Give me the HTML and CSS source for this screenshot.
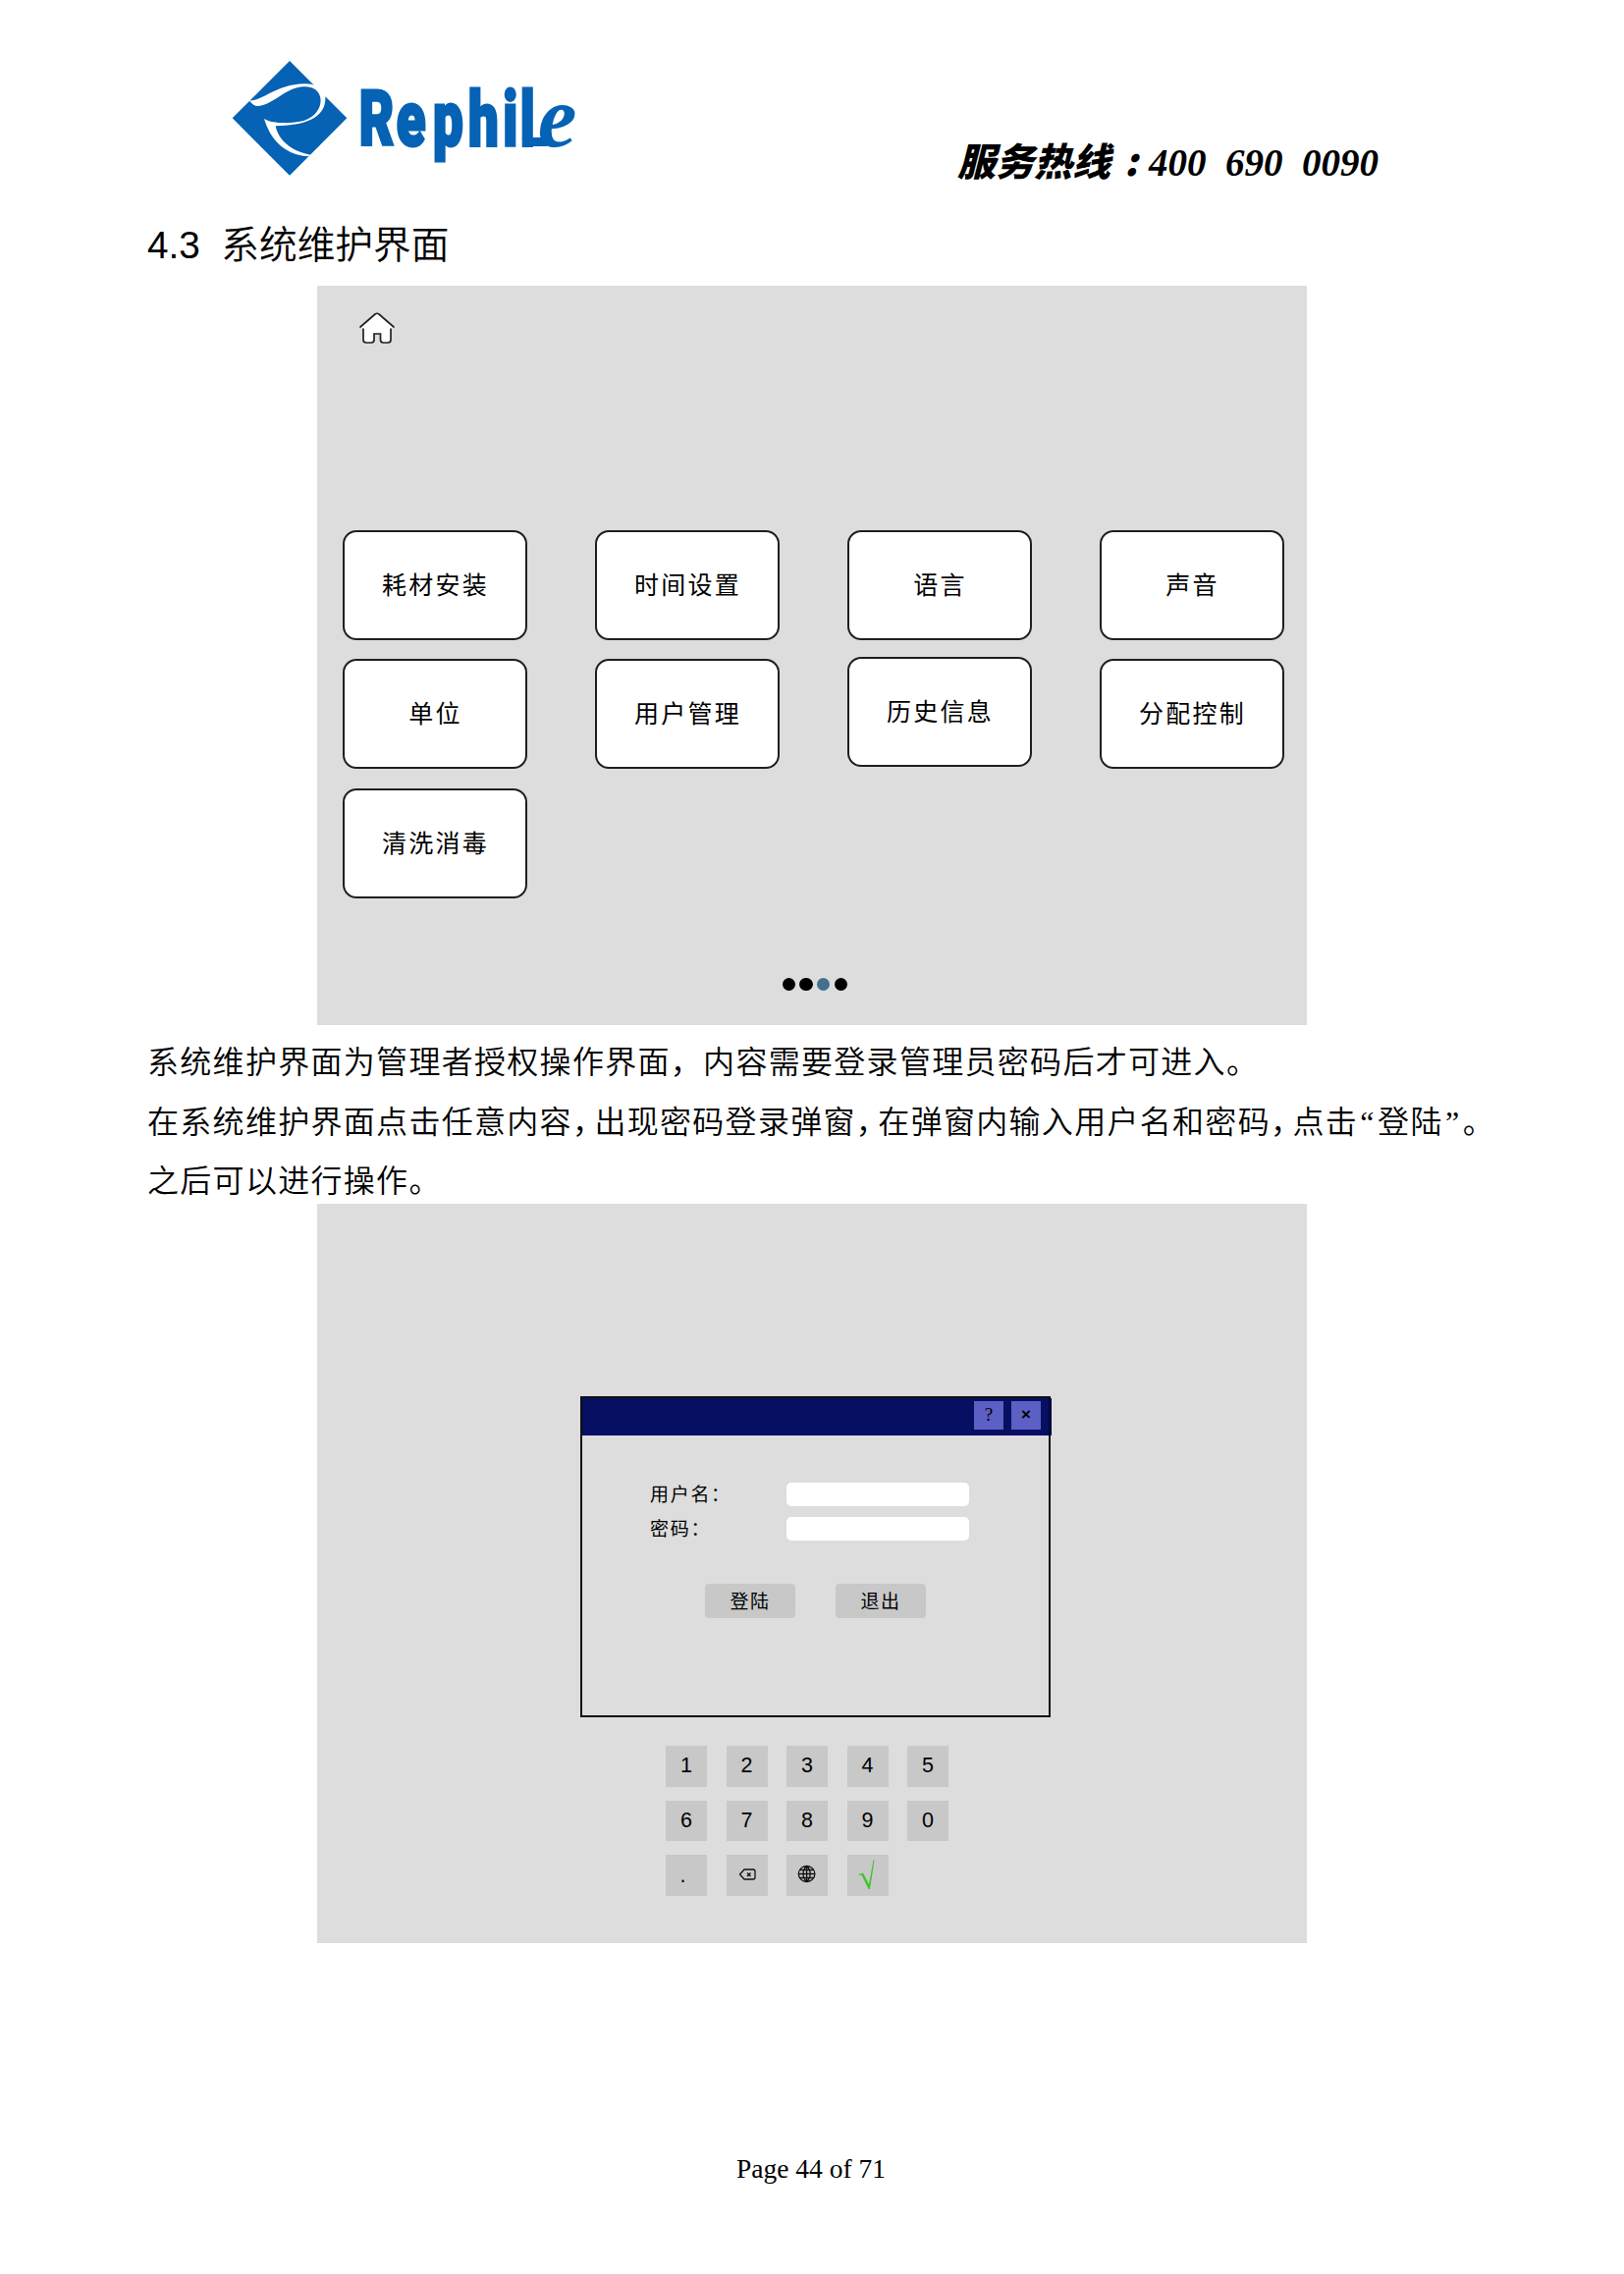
FILE: index.html
```html
<!DOCTYPE html>
<html lang="zh-CN">
<head>
<meta charset="utf-8">
<title>4.3 系统维护界面</title>
<link rel="stylesheet" href="styles.css">
</head>
<body>
<div class="page">
  <header class="header">
    <svg class="logo" viewBox="0 0 1200 420" role="img" aria-label="Rephile">
      <path class="brand" d="M225 36 400 211 225 386 50 211Z"/>
      <path class="swoosh" d="M98 158C145 160 180 108 270 106Q290 105 306 112L334 142C338 195 300 233 182 235C190 275 225 312 292 324L280 328C200 320 165 270 147 213C180 232 240 225 270 218C310 205 325 170 318 145C312 122 290 112 265 115C210 120 175 170 130 174Q115 176 104 160Z"/>
      <text class="brand wordmark" transform="scale(.7 1)" y="295" x="625 787 947 1101 1253 1328">Rephil</text>
      <path class="brand" d="M935 270H1000L1012 297H960Q935 292 935 270Z"/>
      <text class="brand wordmark-e" x="983" y="297">e</text>
    </svg>
    <div class="hotline"><span class="hotline-label">服务热线</span><span class="hotline-colon">:</span>400&nbsp; 690&nbsp; 0090</div>
  </header>

  <h1 class="title"><span class="num">4.3&nbsp; </span>系统维护界面</h1>

  <section class="panel menu">
    <svg class="home" viewBox="0 0 38 34">
      <path class="home-fill" d="M2 16 19 2 36 16 33 18V32H23V22H16V32H5V18Z"/>
      <path class="home-line" d="M2 16 17 3Q19 1.500 21 3L36 16M5 18V29Q5 32 8 32H13Q16 32 16 29V23H22.500V29Q22.500 32 25.500 32H30Q33 32 33 29V18"/>
    </svg>
    <div class="tiles">
      <div class="tile">耗材安装</div>
      <div class="tile">时间设置</div>
      <div class="tile">语言</div>
      <div class="tile">声音</div>
      <div class="tile">单位</div>
      <div class="tile">用户管理</div>
      <div class="tile raised">历史信息</div>
      <div class="tile">分配控制</div>
      <div class="tile">清洗消毒</div>
    </div>
    <div class="dots"><i></i><i></i><i class="current"></i><i></i></div>
  </section>

  <div class="copy">
    <p>系统维护界面为管理者授权操作界面，内容需要登录管理员密码后才可进入。</p>
    <p>在系统维护界面点击任意内容<span class="tight">，</span>出现密码登录弹窗<span class="tight">，</span>在弹窗内输入用户名和密码<span class="tight">，</span>点击<span class="quote">“</span>登陆<span class="quote">”</span>。</p>
    <p>之后可以进行操作。</p>
  </div>

  <section class="panel login">
    <div class="dialog">
      <div class="titlebar"><span class="win help">?</span><span class="win close">×</span></div>
      <div class="dialog-body">
        <div class="field"><label>用户名：</label><span class="input"></span></div>
        <div class="field"><label>密码：</label><span class="input"></span></div>
        <div class="actions"><span class="action">登陆</span><span class="action">退出</span></div>
      </div>
    </div>
    <div class="keys">
      <span>1</span><span>2</span><span>3</span><span>4</span><span>5</span>
      <span>6</span><span>7</span><span>8</span><span>9</span><span>0</span>
      <span class="point">.</span>
      <span><svg width="42" height="41" viewBox="0 0 42 41"><path class="ink" d="M13.500 20 18 15H27Q29 15 29 17V23Q29 25 27 25H18ZM21 18.500 24.500 22M24.500 18.500 21 22"/></svg></span>
      <span><svg width="42" height="41" viewBox="0 0 42 41"><path class="ink" d="M12.300 19.500A8.300 8 0 1 1 28.900 19.500A8.300 8 0 1 1 12.300 19.500M20.600 11.500V27.500M12.500 19.500H29M13.500 15.500H27.700M13.500 23.500H27.700M20.600 11.500C15.800 16 15.800 23 20.600 27.500C25.400 23 25.400 16 20.600 11.500"/></svg></span>
      <span><svg width="42" height="41" viewBox="0 0 42 41"><path class="tick-fill" d="M11.500 20 16 18.500 22 30 26.500 5.500H27.500L23 35H21.500L14.500 20.500 12 21Z"/></svg></span>
    </div>
  </section>

  <footer class="footer">Page 44 of 71</footer>
</div>
</body>
</html>
```
FILE: styles.css
```css
* { box-sizing: border-box; }

body {
  margin: 0;
  background: #fff;
  color: #000;
  font-family: "Noto Sans CJK SC", sans-serif;
}

.page {
  width: 1654px;
  height: 2316px;
  display: flex;
  flex-direction: column;
  overflow: hidden;
}

/* Header */
.header {
  height: 215px;
  padding: 50px 0 0 220px;
  display: flex;
  align-items: flex-start;
  flex: none;
}
.logo { width: 400px; height: 140px; flex: none; }
.brand { fill: #0562b4; }
.swoosh { fill: #fff; }
.wordmark {
  font: 900 234px Roboto, sans-serif;
  stroke: #0562b4;
  stroke-width: 9;
  stroke-linejoin: miter;
}
.wordmark-e { font: italic bold 268px "Liberation Serif", serif; }
.hotline {
  display: flex;
  align-items: baseline;
  margin: 84px 0 0 355px;
  font: italic bold 39px/56px "Liberation Serif", serif;
  white-space: pre;
}
.hotline-label {
  width: 164px;
  font-family: "Noto Sans CJK SC", sans-serif;
  font-weight: 900;
  line-height: 56px;
}
.hotline-colon {
  width: 31px;
  padding-left: 6px;
  font-family: "Noto Sans CJK SC", sans-serif;
  font-weight: 900;
}

.title {
  flex: none;
  height: 76px;
  margin: 0;
  padding: 3px 0 0 150px;
  font-size: 38.700px;
  font-weight: 350;
  line-height: 56px;
}
.num { font-family: "Liberation Sans", sans-serif; font-weight: 400; }

/* Screen panels */
.panel {
  flex: none;
  width: 1008px;
  height: 753px;
  margin-left: 323px;
  background: #ddd;
}
.menu { display: flex; flex-direction: column; }
.home { width: 38px; height: 34px; margin: 26px 0 0 42px; flex: none; }
.home-fill { fill: #fff; }
.home-line { fill: none; stroke: #222; stroke-width: 1.700; stroke-linecap: round; }
.tiles {
  display: grid;
  grid-template-columns: repeat(4, 188px);
  grid-auto-rows: 112px;
  column-gap: 69px;
  row-gap: 19.400px;
  margin: 189px 0 0 26px;
}
.tile {
  display: flex;
  align-items: center;
  justify-content: center;
  padding-bottom: 4px;
  border: 2px solid #231c1e;
  border-radius: 14px;
  background: #fff;
  font-size: 25px;
  letter-spacing: 2.300px;
  text-indent: 1px;
}
.raised { transform: translateY(-2px); }
.dots { display: flex; gap: 4.500px; margin: 81px 0 0 473.500px; }
.dots i { width: 13.300px; height: 13.300px; border-radius: 50%; background: #000; }
.dots .current { background: #42708f; }

/* Body copy */
.copy {
  flex: none;
  height: 182px;
  padding: 5px 0 0 150px;
  font-size: 32px;
  font-weight: 350;
  letter-spacing: 1.300px;
  line-height: 60.500px;
  white-space: nowrap;
  text-spacing-trim: space-all;
}
.copy p { margin: 0; }
.tight { letter-spacing: -9.500px; }
.quote {
  display: inline-block;
  width: 20px;
  text-align: center;
  font-family: "Liberation Serif", serif;
  line-height: 1;
}

/* Login dialog */
.login { padding-top: 196px; }
.dialog {
  width: 479px;
  height: 327px;
  margin-left: 268px;
  border: 2px solid #101010;
}
.titlebar {
  display: flex;
  gap: 8px;
  width: 478px;
  height: 38px;
  padding: 3px 0 0 399px;
  background: #060f61;
  border-right: 3px solid #02063a;
  border-bottom: 1px solid #06067a;
}
.win {
  width: 30px;
  height: 29px;
  background: #5c5fc3;
  text-align: center;
  line-height: 28px;
}
.help { font-family: "Liberation Serif", serif; font-size: 19px; }
.close { font-family: "Liberation Sans", sans-serif; font-size: 17px; font-weight: bold; }
.dialog-body { padding: 48px 0 0 69px; }
.field {
  display: flex;
  align-items: center;
  height: 24px;
  margin-bottom: 10.500px;
}
.field label {
  width: 139px;
  font-size: 19px;
  letter-spacing: 1.700px;
  line-height: 20px;
  padding-bottom: 2px;
}
.input { width: 186px; height: 24px; border-radius: 5px; background: #fff; }
.actions { display: flex; gap: 41px; padding: 34px 0 0 56px; }
.action {
  width: 92px;
  height: 35px;
  border-radius: 4px;
  background: #c8c8c8;
  font-size: 19px;
  letter-spacing: 1.500px;
  line-height: 34px;
  text-align: center;
}

/* Keypad */
.keys {
  display: grid;
  grid-template-columns: repeat(5, 42px);
  grid-auto-rows: 41.500px;
  gap: 14px 19.500px;
  margin: 29px 0 0 355px;
}
.keys span {
  background: #c8c8c8;
  font: 21.500px/40px "Liberation Sans", sans-serif;
  text-align: center;
}
.keys .point { padding-right: 7px; line-height: 42px; }
.keys svg { display: block; }
.ink { fill: none; stroke: #111; stroke-width: 1.300; }
.tick-fill { fill: #3fc52c; }

.footer {
  flex: none;
  margin: 214px 0 0 750px;
  font: 27.500px/32px "Liberation Serif", serif;
}
```
